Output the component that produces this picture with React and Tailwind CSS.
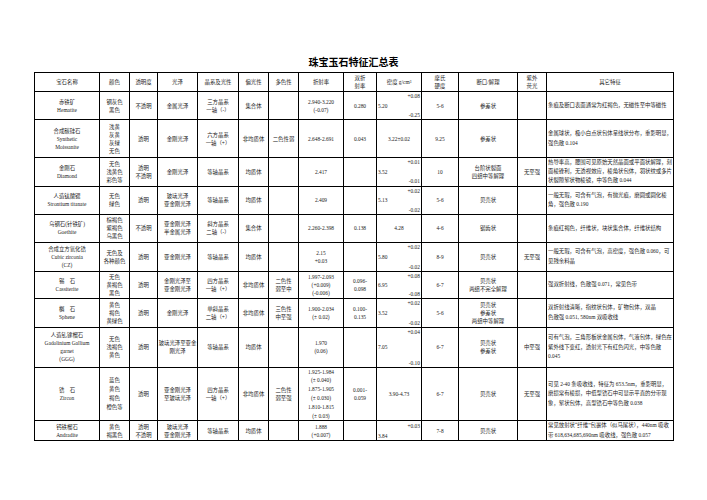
import React from "react";

const widths = [
  "w-[65px]", "w-[30px]", "w-[28px]", "w-[40px]", "w-[41px]", "w-[30px]", "w-[30px]",
  "w-[45px]", "w-[33px]", "w-[45px]", "w-[37px]", "w-[59px]", "w-[29px]", "w-[127px]",
];

const header = [
  "宝石名称", "颜色", "透明度", "光泽", "晶系及光性", "偏光性", "多色性", "折射率",
  "双折\n射率", "密度 g/cm³", "摩氏\n硬度", "断口/解理", "紫外\n荧光", "其它特征",
];

const rows = [
  {
    h: "h-[28px]", dh: "h-[27px]",
    c: [
      "赤铁矿\nHematite", "钢灰色\n黑色", "不透明", "金属光泽", "三方晶系\n一轴（-）", "集合体", "",
      "2.940-3.220\n(-0.07)", "0.280", { t: "+0.08", m: "5.20", b: "-0.25" }, "5-6", "参差状", "",
      "条痕及断口表面通常为红褐色，无磁性至中等磁性",
    ],
  },
  {
    h: "h-[38px]", dh: "h-[37px]",
    c: [
      "合成碳硅石\nSynthetic\nMoissanite", "浅黄\n灰黄\n灰绿\n无色", "透明", "金刚光泽", "六方晶系\n一轴（+）", "非均质体", "二色性弱",
      "2.648-2.691", "0.043", { c: "3.22±0.02" }, "9.25", "参差状", "",
      "金属球状，极小白点状包体呈线状分布，重影明显，强色散 0.104",
    ],
  },
  {
    h: "h-[28px]", dh: "h-[27px]",
    c: [
      "金刚石\nDiamond", "无色\n浅黄色\n彩色等", "透明\n不透明", "金刚光泽", "等轴晶系", "均质体", "",
      "2.417", "", { t: "+0.01", m: "3.52", b: "-0.01" }, "10", "台阶状裂面\n四组中等解理", "无至强",
      "热导率高，腰围可见原始天然晶面或平面状解理，刻面棱锋利，无透视效应，棱角状包体，羽状纹或多片状裂隙絮状物棱镜，中等色散 0.044",
    ],
  },
  {
    h: "h-[28px]", dh: "h-[27px]",
    c: [
      "人造钛酸锶\nStrontium titanate", "无色\n绿色", "透明", "玻璃光泽\n亚金刚光泽", "等轴晶系", "均质体", "",
      "2.409", "", { t: "+0.02", m: "5.13", b: "-0.02" }, "5-6", "贝壳状", "",
      "一般无瑕，可含有气泡，有抛光痕，磨圆或圆化棱角，强色散 0.190",
    ],
  },
  {
    h: "h-[28px]", dh: "h-[27px]",
    c: [
      "乌钢石(针铁矿)\nGoethite", "棕褐色\n紫褐色\n乌黑色", "不透明", "亚金刚光泽\n半金属光泽", "斜方晶系\n二轴（-）", "集合体", "",
      "2.260-2.398", "0.138", { c: "4.28" }, "4-6", "锯齿状", "",
      "条痕红褐色，纤维状，块状集合体，纤维状结构",
    ],
  },
  {
    h: "h-[29px]", dh: "h-[28px]",
    c: [
      "合成立方氧化锆\nCubic zirconia\n(CZ)", "无色及\n各种颜色", "透明", "亚金刚光泽", "等轴晶系", "均质体", "",
      "2.15\n+0.03", "", { t: "+0.02", m: "5.80", b: "-0.02" }, "8-9", "贝壳状", "无至强",
      "一般无瑕，可含有气泡，高密度，强色散 0.060，可见残余料晶",
    ],
  },
  {
    h: "h-[27px]", dh: "h-[26px]",
    c: [
      "锡　石\nCassiterite", "无色\n黄褐色\n黑色", "透明", "金刚光泽至\n亚金刚光泽", "四方晶系\n一轴（+）", "非均质体", "二色性\n弱至中",
      "1.997-2.093\n(+0.009)\n(-0.006)", "0.096-\n0.098", { t: "+0.08", m: "6.95", b: "-0.08" }, "6-7", "贝壳状\n两组不完全解理", "",
      "强双折射线，色散强 0.071，常见色带",
    ],
  },
  {
    h: "h-[29px]", dh: "h-[28px]",
    c: [
      "榍　石\nSphene", "黄色\n褐色\n黄绿色", "透明", "金刚光泽", "单斜晶系\n二轴（+）", "非均质体", "三色性\n中至强",
      "1.900-2.034\n(± 0.02)", "0.100-\n0.135", { t: "+0.02", m: "3.52", b: "-0.02" }, "5-6", "贝壳状\n参差状\n两组中等解理", "",
      "双折射线清晰，指纹状包体，矿物包体，双晶\n色散强 0.051, 580nm 双吸收线",
    ],
  },
  {
    h: "h-[40px]", dh: "h-[39px]",
    c: [
      "人造钆镓榴石\nGadolinium Gallium\ngarnet\n(GGG)", "无色\n浅褐色\n黄色", "透明", "玻璃光泽至亚金\n刚光泽", "等轴晶系", "均质体", "",
      "1.970\n(0.06)", "", { t: "+0.04", m: "7.05", b: "-0.10" }, "6-7", "贝壳状\n参差状", "中至强",
      "可有气泡，三角形板状金属包体，气液包体，绿色在紫外线下变红，透射光下有红色闪光，中等色散 0.045",
    ],
  },
  {
    h: "h-[53px]", dh: "h-[52px]", zr: true,
    c: [
      "锆　石\nZircon", "蓝色\n黄色\n褐色\n橙色等", "透明", "亚金刚光泽\n至玻璃光泽", "四方晶系\n一轴（+）", "非均质体", "二色性\n弱至强",
      "1.925-1.984\n(± 0.040)\n1.875-1.905\n(± 0.030)\n1.810-1.815\n(± 0.03)", "0.001-\n0.059", { c: "3.90-4.73" }, "6-7", "贝壳状", "无至强",
      "可见 2-40 条吸收线，特征为 653.5nm，重影明显，磨损常有棱损，中低型锆石中可显示平直的分带现象，絮状包体，高型锆石中等色散 0.038",
    ],
  },
  {
    h: "h-[19px]", dh: "h-[18px]",
    c: [
      "钙铁榴石\nAndradite", "黄色\n褐黑色", "透明\n不透明", "玻璃光泽\n亚金刚光泽", "等轴晶系", "均质体", "",
      "1.888\n(+0.007)", "", { t: "+0.03", b2: "3.84" }, "7-8", "贝壳状", "",
      "常见放射状“纤维”包裹体（似马尾状），440nm 吸收带 618,634,685,690nm 吸收线，强色散 0.057",
    ],
  },
];

function Density({ d, dh }) {
  if (d.c) return <div className="text-center">{d.c}</div>;
  if (d.b2)
    return (
      <div className={`flex flex-col justify-between ${dh}`}>
        <div className="text-right pr-[1px]">{d.t}</div>
        <div className="text-left pl-[1px]">{d.b2}</div>
      </div>
    );
  return (
    <div className={`flex flex-col justify-between ${dh}`}>
      <div className="text-right pr-[1px]">{d.t}</div>
      <div className="text-left pl-[1px]">{d.m}</div>
      <div className="text-right pr-[1px]">{d.b}</div>
    </div>
  );
}

export default function App() {
  return (
    <div className="w-[707px] min-h-[500px] bg-white pt-[55px] text-[#222] font-['Liberation_Serif','Noto_Sans_CJK_SC',serif]">
      <div className="ml-[34px] w-[639px]">
        <div className="mb-[3px] text-center text-[10px] leading-[14px] font-bold text-black font-['Noto_Sans_CJK_SC',sans-serif]">
          珠宝玉石特征汇总表
        </div>
        <table className="w-[639px] table-fixed border-collapse text-[5.4px] leading-[8px]">
          <colgroup>
            {widths.map((w, i) => (
              <col key={i} className={w} />
            ))}
          </colgroup>
          <thead>
            <tr className="h-[19px]">
              {header.map((t, i) => (
                <th key={i} className="border border-black p-0 text-center align-middle font-normal whitespace-pre-line">
                  {t}
                </th>
              ))}
            </tr>
          </thead>
          <tbody>
            {rows.map((r, ri) => (
              <tr key={ri} className={r.h}>
                {r.c.map((cell, ci) => {
                  if (ci === 9) {
                    return (
                      <td key={ci} className="border border-black p-0 align-middle">
                        <Density d={cell} dh={r.dh} />
                      </td>
                    );
                  }
                  if (ci === 13) {
                    return (
                      <td key={ci} className="border border-black py-0 pl-[1px] pr-[1px] text-left align-middle leading-[9.2px] whitespace-pre-line">
                        {cell}
                      </td>
                    );
                  }
                  const tall = r.zr && (ci === 7 || ci === 1);
                  return (
                    <td
                      key={ci}
                      className={
                        tall
                          ? "border border-black p-0 text-center align-middle leading-[8.8px] whitespace-pre-line"
                          : "border border-black p-0 text-center align-middle whitespace-pre-line"
                      }
                    >
                      {cell}
                    </td>
                  );
                })}
              </tr>
            ))}
          </tbody>
        </table>
      </div>
    </div>
  );
}
